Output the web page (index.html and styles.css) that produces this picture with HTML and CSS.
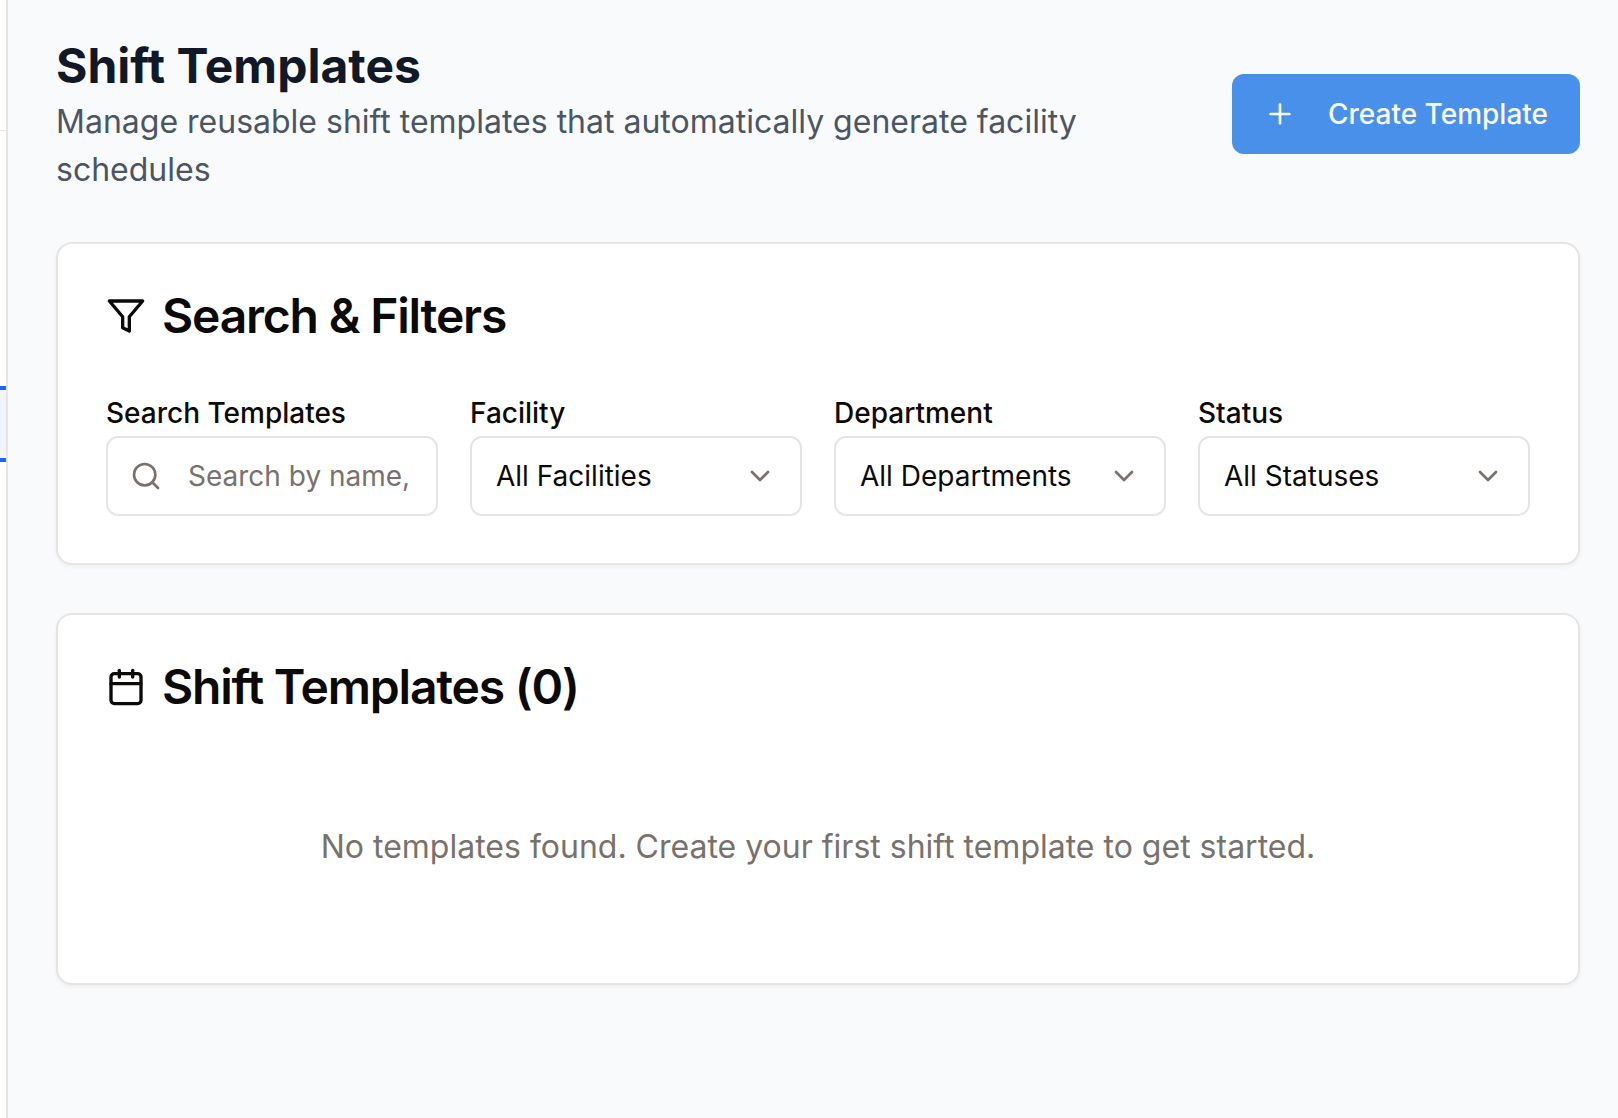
FILE: index.html
```html
<!DOCTYPE html>
<html lang="en">
<head>
  <meta charset="UTF-8">
  <title>Shift Templates</title>
  <link rel="stylesheet" href="styles.css">
</head>
<body>
  <aside class="sidebar">
    <div class="sidebar-head"></div>
    <div class="sidebar-active"></div>
  </aside>
  <main class="content">
    <header class="page-head">
      <div class="page-titles">
        <h1>Shift Templates</h1>
        <p>Manage reusable shift templates that automatically generate facility schedules</p>
      </div>
      <button class="btn-create">
        <svg class="icon-plus" viewBox="0 0 24 24"><path d="M5 12h14"/><path d="M12 5v14"/></svg>
        Create Template
      </button>
    </header>

    <section class="card card-filters">
      <h2 class="card-title">
        <svg class="icon-title" viewBox="0 0 24 24"><polygon points="22 3 2 3 10 12.46 10 19 14 21 14 12.46 22 3"/></svg>
        Search &amp; Filters
      </h2>
      <div class="filters">
        <div class="field">
          <label>Search Templates</label>
          <div class="control search">
            <svg class="icon-search" viewBox="0 0 24 24"><circle cx="11" cy="11" r="8"/><path d="m21 21-4.3-4.3"/></svg>
            <span class="placeholder">Search by name,</span>
          </div>
        </div>
        <div class="field">
          <label>Facility</label>
          <div class="control select">
            <span>All Facilities</span>
            <svg class="icon-chevron" viewBox="0 0 24 24"><path d="m6 9 6 6 6-6"/></svg>
          </div>
        </div>
        <div class="field">
          <label>Department</label>
          <div class="control select">
            <span>All Departments</span>
            <svg class="icon-chevron" viewBox="0 0 24 24"><path d="m6 9 6 6 6-6"/></svg>
          </div>
        </div>
        <div class="field">
          <label>Status</label>
          <div class="control select">
            <span>All Statuses</span>
            <svg class="icon-chevron" viewBox="0 0 24 24"><path d="m6 9 6 6 6-6"/></svg>
          </div>
        </div>
      </div>
    </section>

    <section class="card card-list">
      <h2 class="card-title">
        <svg class="icon-title" viewBox="0 0 24 24"><path d="M8 2v4"/><path d="M16 2v4"/><rect x="3" y="4" width="18" height="18" rx="2"/><path d="M3 10h18"/></svg>
        Shift Templates (0)
      </h2>
      <p class="empty">No templates found. Create your first shift template to get started.</p>
    </section>
  </main>
</body>
</html>
```

FILE: styles.css
```css
* { box-sizing: border-box; }
html, body { height: 100%; }
body { margin: 0; display: flex; height: 1118px; overflow: hidden; font-family: Inter, sans-serif; background: #f9fafb; color: #0c0a09; }
svg { fill: none; stroke: currentColor; stroke-linecap: round; stroke-linejoin: round; stroke-width: 2; flex-shrink: 0; }

.sidebar { width: 8px; flex-shrink: 0; background: #fff; border-right: 2px solid #e7e5e4; }
.sidebar-head { height: 131px; border-bottom: 1px solid #e7e5e4; }
.sidebar-active { height: 76px; margin-top: 255px; background: #eff6ff; border-top: 4px solid #2563eb; border-bottom: 4px solid #2563eb; }

.content { flex: 1; min-width: 0; padding: 34px 38px 0 48px; }
.page-head { display: flex; align-items: center; justify-content: space-between; gap: 64px; margin-bottom: 48px; }
.page-titles { flex: 1; min-width: 0; max-width: 1060px; }
h1 { margin: 0; font-size: 48px; line-height: 64px; font-weight: 700; color: #111827; }
.page-titles p { margin: 0; font-size: 32px; line-height: 48px; color: #4b5563; }
.btn-create { display: flex; align-items: center; gap: 32px; height: 80px; padding: 0 32px; border: 0; border-radius: 12px; background: #4990ea; color: #f8fafc; font-family: inherit; font-size: 28px; font-weight: 500; white-space: nowrap; }
.icon-plus { width: 32px; height: 32px; }

.card { background: #fff; border: 2px solid #e7e5e4; border-radius: 16px; padding: 48px; margin-bottom: 48px; box-shadow: 0 2px 4px rgba(0, 0, 0, 0.05); }
.card-filters { padding-bottom: 47px; }
.card-list { height: 372px; }
.card-title { display: flex; align-items: center; gap: 16px; margin: 0 0 57px; font-size: 48px; line-height: 48px; font-weight: 600; letter-spacing: -1.2px; }
.card-list .card-title { margin-bottom: 48px; }
.icon-title { width: 40px; height: 40px; }

.filters { display: grid; grid-template-columns: repeat(4, 1fr); gap: 32px; }
.field label { display: block; font-size: 28px; line-height: 32px; font-weight: 500; margin-bottom: 7px; }
.control { display: flex; align-items: center; gap: 24px; height: 80px; padding: 0 24px; border: 2px solid #e7e5e4; border-radius: 12px; font-size: 28px; white-space: nowrap; overflow: hidden; }
.search { gap: 26px; padding-left: 22px; }
.select { justify-content: space-between; }
.placeholder { color: #78716c; }
.icon-search { width: 32px; height: 32px; color: #78716c; }
.icon-chevron { width: 32px; height: 32px; color: #78716c; }

.empty { margin: 112px 0 0; text-align: center; font-size: 32px; line-height: 48px; color: #78716c; }
```
